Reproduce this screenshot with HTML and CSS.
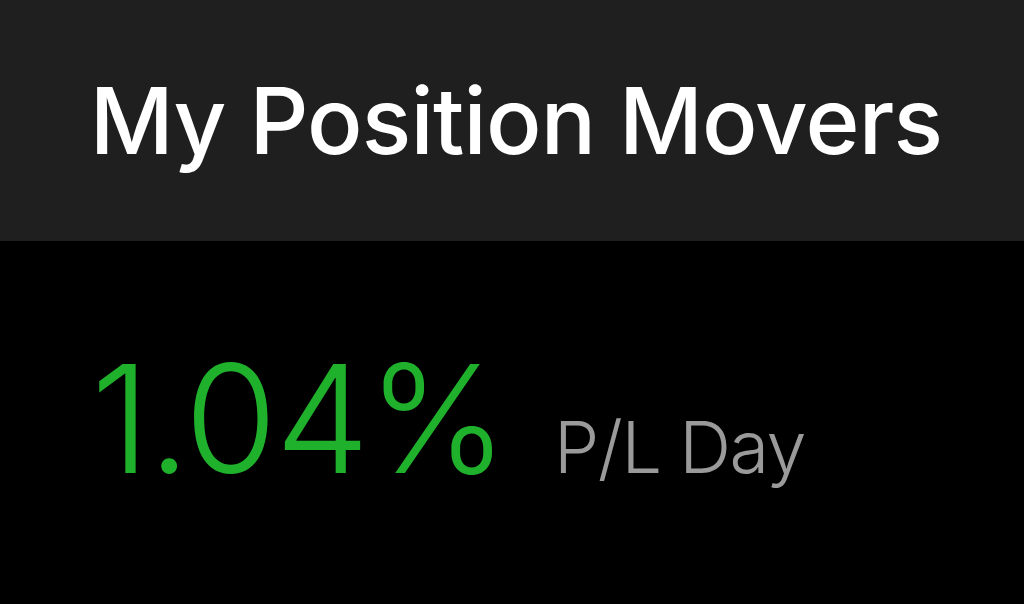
FILE: index.html
```html
<!DOCTYPE html>
<html lang="en">
<head>
  <meta charset="UTF-8" />
  <title>My Position Movers</title>
  <link rel="stylesheet" href="styles.css">
</head>
<body>
  <header class="bar">
    <h1>My Position Movers</h1>
  </header>

  <section class="summary">
    <span class="pct">1.04%</span>
    <span class="label">P/L Day</span>
  </section>
</body>
</html>
```

FILE: styles.css
```css
* {
  margin: 0;
  padding: 0;
  box-sizing: border-box;
}

html, body {
  height: 100%;
}

body {
  background: #000;
  color: #fff;
  font-family: Inter, 'Noto Sans', sans-serif;
  overflow: hidden;
}

.bar {
  height: 241px;
  background: #1f1f1f;
  display: flex;
  align-items: center;
  justify-content: center;
}

.bar h1 {
  font-size: 92px;
  font-weight: 500;
  letter-spacing: -0.8px;
  line-height: 1;
  padding-left: 8px;
}

.summary {
  display: flex;
  align-items: baseline;
  gap: 48px;
  padding: 103px 0 0 91px;
}

.pct {
  font-size: 150px;
  font-weight: 300;
  color: #1fb12c;
  letter-spacing: -2px;
  line-height: 1;
}

.label {
  font-size: 72px;
  font-weight: 300;
  color: #9a9a9a;
  letter-spacing: -1.5px;
  line-height: 1;
}
```
